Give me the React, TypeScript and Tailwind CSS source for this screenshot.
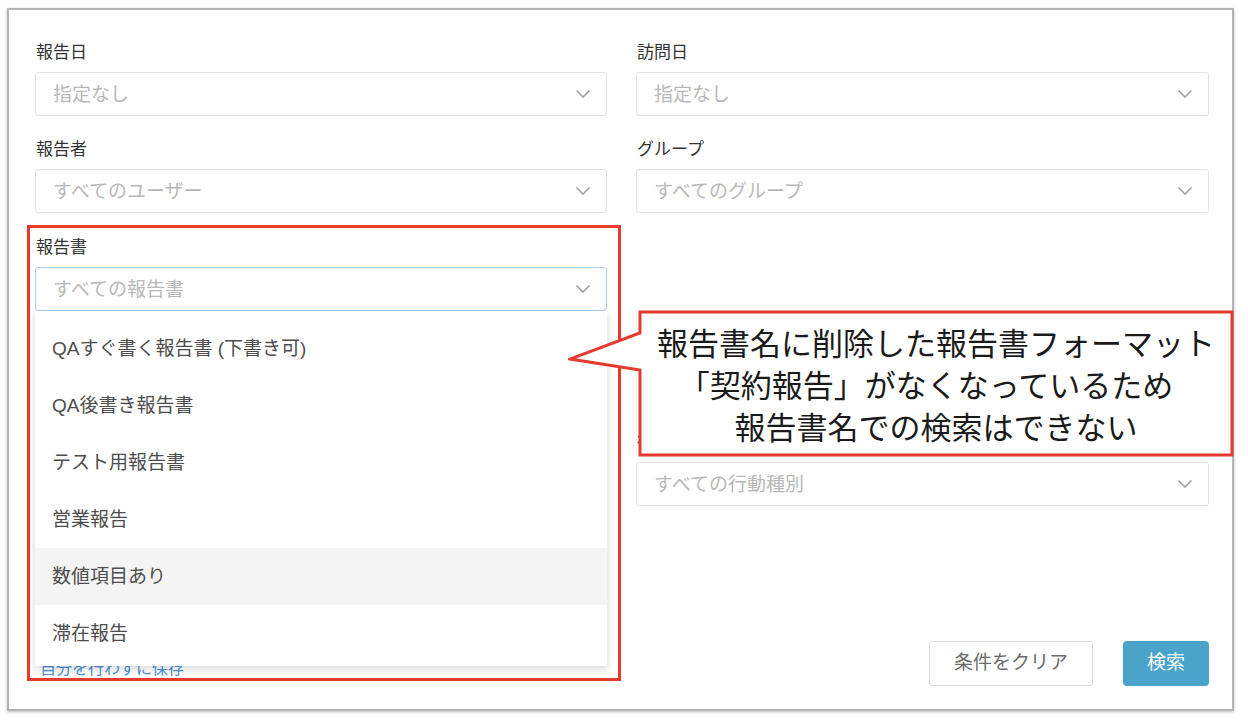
import React from "react";

const FONT = { fontFamily: '"Liberation Sans", "Noto Sans CJK JP", sans-serif' };

function Chevron() {
  return (
    <svg width="16" height="10" viewBox="0 0 16 10" className="shrink-0">
      <polyline points="1.5,1.5 8,8 14.5,1.5" fill="none" stroke="#a3a3a3" strokeWidth="1.6" />
    </svg>
  );
}

function Select({ placeholder, focused }: { placeholder: string; focused?: boolean }) {
  return (
    <div
      className={
        "flex h-[44px] items-center justify-between rounded-[3px] bg-white pl-[17px] pr-[15px] " +
        (focused ? "border-[1.5px] border-[#a9d0f6]" : "border border-[#e3e3e3]")
      }
    >
      <span className="text-[19px] leading-none text-[#b8b8b8]">{placeholder}</span>
      <Chevron />
    </div>
  );
}

function Field({
  label,
  placeholder,
  focused,
  className,
  children,
}: {
  label: string;
  placeholder: string;
  focused?: boolean;
  className?: string;
  children?: React.ReactNode;
}) {
  return (
    <div className={"relative " + (className ?? "")}>
      <div className="mb-[8px] pl-[1px] text-[17px] leading-[22px] text-[#333333]">{label}</div>
      <Select placeholder={placeholder} focused={focused} />
      {children}
    </div>
  );
}

const items = [
  "QAすぐ書く報告書 (下書き可)",
  "QA後書き報告書",
  "テスト用報告書",
  "営業報告",
  "数値項目あり",
  "滞在報告",
];

export default function App() {
  return (
    <div className="relative h-[722px] w-[1248px] overflow-hidden bg-white" style={FONT}>
      <div className="ml-[7px] mt-[8px] w-[1227px] border-2 border-[#b3b3b3] bg-white pb-[23px] pl-[26px] pr-[23px] pt-[32px] shadow-[0_1px_3px_rgba(0,0,0,0.25)]">
        <div className="grid grid-cols-[572px_573px] gap-x-[29px]">
          <div className="flex flex-col">
            <Field label="報告日" placeholder="指定なし" />
            <Field label="報告者" placeholder="すべてのユーザー" className="mt-[23px]" />
            <Field label="報告書" placeholder="すべての報告書" focused className="z-20 mt-[24px]">
              <div className="absolute left-0 top-full w-[572px] bg-white pb-[4px] pt-[9px] shadow-[0_3px_8px_rgba(0,0,0,0.16)]">
                {items.map((it, i) => (
                  <div
                    key={it}
                    className={
                      "flex h-[57px] items-center pl-[17px] text-[19px] text-[#4d4d4d] " +
                      (i === 4 ? "bg-[#f4f4f4]" : "")
                    }
                  >
                    <span className="translate-y-[1px]">{it}</span>
                  </div>
                ))}
              </div>
            </Field>
          </div>
          <div className="flex flex-col">
            <Field label="訪問日" placeholder="指定なし" />
            <Field label="グループ" placeholder="すべてのグループ" className="mt-[23px]" />
            <Field label="行動種別" placeholder="すべての行動種別" className="mt-[219px]" />
          </div>
        </div>
        <div className="mt-[135px] flex items-center justify-between">
          <span className="translate-y-[5px] pl-[5px] text-[16px] text-[#4a8fdc]">自分を行わずに保存</span>
          <div className="flex items-center gap-[30px]">
            <button className="h-[45px] w-[164px] rounded-[3px] border border-[#dcdcdc] bg-white text-[19px] text-[#6b6b6b]">
              条件をクリア
            </button>
            <button className="h-[45px] w-[86px] rounded-[4px] bg-[#4aa3c9] text-[19px] text-white">
              検索
            </button>
          </div>
        </div>
      </div>

      {/* annotation rectangle */}
      <div className="pointer-events-none absolute left-[27px] top-[225px] z-30 h-[456px] w-[594px] border-[3px] border-[#e63a2e]" />

      {/* callout */}
      <div className="absolute left-[568px] top-[309px] z-40 h-[150px] w-[668px]">
        <svg width="668" height="150" viewBox="0 0 668 150" className="absolute left-0 top-0">
          <path
            d="M72,3 H664 V146 H72 V61 L2,50 L72,24 Z"
            fill="white"
            stroke="#e63a2e"
            strokeWidth="3"
            strokeLinejoin="miter"
          />
        </svg>
        <div
          className="absolute left-[72px] top-[3px] flex h-[143px] w-[592px] flex-col items-center justify-center text-[31px] font-normal leading-[42px] text-[#1a1a1a]"
          style={{ fontFamily: '"Noto Sans CJK JP", sans-serif' }}
        >
          <div>報告書名に削除した報告書フォーマット</div>
          <div className="-translate-x-[10px]">「契約報告」がなくなっているため</div>
          <div>報告書名での検索はできない</div>
        </div>
      </div>
    </div>
  );
}
